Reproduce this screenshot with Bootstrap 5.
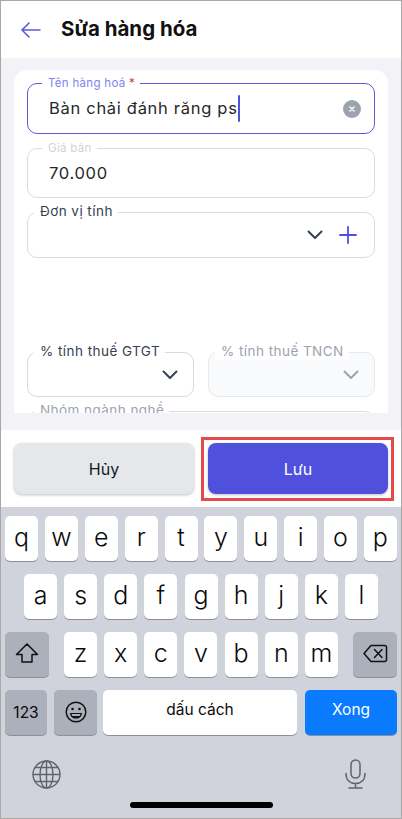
<!DOCTYPE html>
<html lang="vi"><head><meta charset="utf-8">
<link href="https://cdn.jsdelivr.net/npm/bootstrap@5.3.0/dist/css/bootstrap.min.css" rel="stylesheet">
<style>
html,body{margin:0;height:819px;overflow:hidden;background:#fff}
.shell{width:402px;height:819px;border:1px solid #a8a8a8;font-family:Inter,"Liberation Sans",sans-serif;overflow:hidden}
.topbar{height:57px;padding-left:20px;gap:20px;background:#fff}
.topbar h1{font-size:20.5px;font-weight:700;margin:0;color:#111;line-height:1}
.pagebody{height:372px;background:#f2f2f7;padding:12px 13px 0}
.formcard{height:343px;background:#fff;border-radius:13px 13px 0 0;padding:13px 13px 0;overflow:hidden}
.fieldbox{position:relative;border:1px solid #d8dade;border-radius:10px;background:#fff;margin-bottom:14px;display:flex;align-items:center}
.fieldlabel{position:absolute;left:12px;top:-9px;background:#fff;padding:0 5px 0 6px;font-size:12px;line-height:16px;letter-spacing:.3px;white-space:nowrap}
.boxname{height:51px;border-color:#5d5bd6;padding-left:21px;padding-right:13px}
.boxprice{height:50px;padding-left:21px}
.boxunit{height:46px;padding-right:17px}
.boxtax{height:45px;padding-right:15px;margin:0;flex:1 1 0}
.boxgroup{height:30px;margin-top:14px}
.tiny{font-size:11.5px;left:14px;top:-9px;color:#8583ec}
.tiny.muted{color:#d2d4d8}
.main-label{left:6px;font-size:13.500px;top:-11px;line-height:18px;color:#374151;letter-spacing:.45px}
.main-label.off{color:#9ca3af;background:#fff}
.boxoff{background:#f9fafb;border-color:#e7e8eb}
.valtext{font-size:16.5px;letter-spacing:.7px;color:#27272a;line-height:1}
.caret{display:inline-block;width:2px;height:27px;background:#5050db;border-radius:1px}
.clearbtn{width:18px;height:18px;border-radius:50%;background:#9ca3af}
.spacerzone{height:80px}
.twocol{gap:14px;display:flex}
.actionbar{height:77px;background:#fff;padding:13px 13px;gap:14px}
.actslot{flex:1 1 0;position:relative}
.actslot.flagged::after{content:"";position:absolute;inset:-6px -6px -7px -7px;border:3px solid #e34b4b;pointer-events:none}
.actbtn{width:100%;height:51px;border:0;border-radius:8px;font-size:16px;font-family:inherit;padding:0;box-shadow:0 1px 3px rgba(0,0,0,.25);display:block}
.actcancel{background:#e5e7eb;color:#111827}
.actsave{background:#4f50db;color:#fff}
.kbd{height:311px;background:#d0d3db;padding:9px 4px 0;font-family:Inter,"Liberation Sans",Arial,sans-serif}
.keyrow{display:flex;justify-content:space-between;height:45px;margin-bottom:13px}
.keyrow.mid{padding:0 19px 0 19px}
.keyface{height:45px;width:33px;background:#fff;border-radius:5px;box-shadow:0 1px 0 #8d9099;display:flex;align-items:center;justify-content:center;font-size:25px;font-weight:300;color:#0b0b0b;padding-bottom:3px;line-height:1}
.keydark{background:#abb0ba}
.keyshift{width:44px;padding-bottom:3px}
.threecol{display:flex;justify-content:space-between;width:274px}
.keynum{width:42px;font-size:15.500px;font-weight:400;padding:0}
.keyemoji{width:43px;padding:0 0 2px;margin-left:7px}
.keyspace{width:194px;margin-left:6px;font-size:15.500px;font-weight:400;padding-bottom:5px}
.keygo{width:92px;margin-left:8px;background:#0a7aff;color:#fff;font-size:15.500px;font-weight:400;padding-bottom:5px}
.kbdfoot{padding:0 31px 0 27px;margin-top:24px}
.homebar{width:143px;height:6px;background:#000;border-radius:3px;margin:13px auto 0}
</style></head>
<body>
<div class="shell d-flex flex-column">
  <header class="topbar d-flex align-items-center">
    <svg width="20" height="16" viewBox="0 0 20 16" fill="none" stroke="#5b5bd6" stroke-width="1.600" stroke-linecap="round" stroke-linejoin="round"><path d="M1 8H19M8 1 1 8 8 15"/></svg>
    <h1>Sửa hàng hóa</h1>
  </header>
  <main class="pagebody">
    <div class="formcard">
      <div class="fieldbox boxname">
        <span class="fieldlabel tiny">Tên hàng hoá <span class="text-danger">*</span></span>
        <span class="valtext">Bàn chải đánh răng ps</span><span class="caret"></span>
        <span class="clearbtn ms-auto d-flex align-items-center justify-content-center"><svg width="6" height="6" viewBox="0 0 6 6" stroke="#fff" stroke-width="1.500" stroke-linecap="round"><path d="M1 1 5 5M5 1 1 5"/></svg></span>
      </div>
      <div class="fieldbox boxprice">
        <span class="fieldlabel tiny muted">Giá bán</span>
        <span class="valtext">70.000</span>
      </div>
      <div class="fieldbox boxunit justify-content-end">
        <span class="fieldlabel main-label">Đơn vị tính</span>
        <svg class="me-3" width="16" height="10" viewBox="0 0 16 10" fill="none" stroke="#374151" stroke-width="2" stroke-linecap="round" stroke-linejoin="round"><path d="M1.500 1.500 8 8l6.500-6.500"/></svg>
        <svg width="18" height="18" viewBox="0 0 18 18" fill="none" stroke="#4f50db" stroke-width="1.800" stroke-linecap="round"><path d="M9 1V17M1 9H17"/></svg>
      </div>
      <div class="spacerzone"></div>
      <div class="twocol">
        <div class="fieldbox boxtax justify-content-end">
          <span class="fieldlabel main-label">% tính thuế GTGT</span>
          <svg width="16" height="10" viewBox="0 0 16 10" fill="none" stroke="#374151" stroke-width="2" stroke-linecap="round" stroke-linejoin="round"><path d="M1.500 1.500 8 8l6.500-6.500"/></svg>
        </div>
        <div class="fieldbox boxtax boxoff justify-content-end">
          <span class="fieldlabel main-label off">% tính thuế TNCN</span>
          <svg width="16" height="10" viewBox="0 0 16 10" fill="none" stroke="#9ca3af" stroke-width="2" stroke-linecap="round" stroke-linejoin="round"><path d="M1.500 1.500 8 8l6.500-6.500"/></svg>
        </div>
      </div>
      <div class="fieldbox boxgroup">
        <span class="fieldlabel main-label off">Nhóm ngành nghề</span>
      </div>
    </div>
  </main>
  <div class="actionbar d-flex">
    <div class="actslot"><button class="actbtn actcancel" type="button">Hủy</button></div>
    <div class="actslot flagged"><button class="actbtn actsave" type="button">Lưu</button></div>
  </div>
  <div class="kbd">
    <div class="keyrow">
      <span class="keyface">q</span><span class="keyface">w</span><span class="keyface">e</span><span class="keyface">r</span><span class="keyface">t</span><span class="keyface">y</span><span class="keyface">u</span><span class="keyface">i</span><span class="keyface">o</span><span class="keyface">p</span>
    </div>
    <div class="keyrow mid">
      <span class="keyface">a</span><span class="keyface">s</span><span class="keyface">d</span><span class="keyface">f</span><span class="keyface">g</span><span class="keyface">h</span><span class="keyface">j</span><span class="keyface">k</span><span class="keyface">l</span>
    </div>
    <div class="keyrow">
      <span class="keyface keydark keyshift"><svg width="24" height="22" viewBox="0 0 24 22" fill="none" stroke="#111" stroke-width="1.500" stroke-linejoin="round"><path d="M12 2 1.500 12.500H7V20H17V12.500H22.500Z"/></svg></span>
      <span class="threecol">
        <span class="keyface">z</span><span class="keyface">x</span><span class="keyface">c</span><span class="keyface">v</span><span class="keyface">b</span><span class="keyface">n</span><span class="keyface">m</span>
      </span>
      <span class="keyface keydark keyshift"><svg width="25" height="19" viewBox="0 0 25 19" fill="none" stroke="#111" stroke-width="1.500" stroke-linejoin="round" stroke-linecap="round"><path d="M8 1.500H21.500A2 2 0 0 1 23.500 3.500V15.500A2 2 0 0 1 21.500 17.500H8L1 9.500Z"/><path d="M11.500 5.500 19 13.500M19 5.500 11.500 13.500"/></svg></span>
    </div>
    <div class="keyrow justify-content-start">
      <span class="keyface keydark keynum">123</span>
      <span class="keyface keydark keyemoji"><svg width="22" height="22" viewBox="0 0 22 22" fill="none" stroke="#111" stroke-width="1.500"><circle cx="11" cy="11" r="9.800"/><circle cx="7.500" cy="8" r="1.300" fill="#111" stroke="none"/><circle cx="14.500" cy="8" r="1.300" fill="#111" stroke="none"/><path d="M5 12H17C17 15.500 14.500 17.500 11 17.500S5 15.500 5 12Z" fill="#111" stroke="none"/><path d="M6.500 13H15.500C15.300 14 15 14.500 14.500 15H7.500C7 14.500 6.700 14 6.500 13Z" fill="#abb0ba" stroke="none"/></svg></span>
      <span class="keyface keyspace">dấu cách</span>
      <span class="keyface keygo">Xong</span>
    </div>
    <div class="kbdfoot d-flex justify-content-between align-items-center">
      <svg width="29" height="29" viewBox="0 0 29 29" fill="none" stroke="#5f636d" stroke-width="1.400"><circle cx="14.500" cy="14.500" r="13.500"/><ellipse cx="14.500" cy="14.500" rx="6.500" ry="13.500"/><path d="M14.500 1V28M1 14.500H28M3 7.500H26M3 21.500H26"/></svg>
      <svg width="21" height="30" viewBox="0 0 21 30" fill="none" stroke="#5f636d" stroke-width="1.500" stroke-linecap="round"><rect x="6" y="1" width="9" height="18" rx="4.500"/><path d="M1 14.500C1 21 5 24.500 10.500 24.500S20 21 20 14.500M10.500 24.500V29M4 29H17"/></svg>
    </div>
    <div class="homebar"></div>
  </div>
</div>
</body></html>
